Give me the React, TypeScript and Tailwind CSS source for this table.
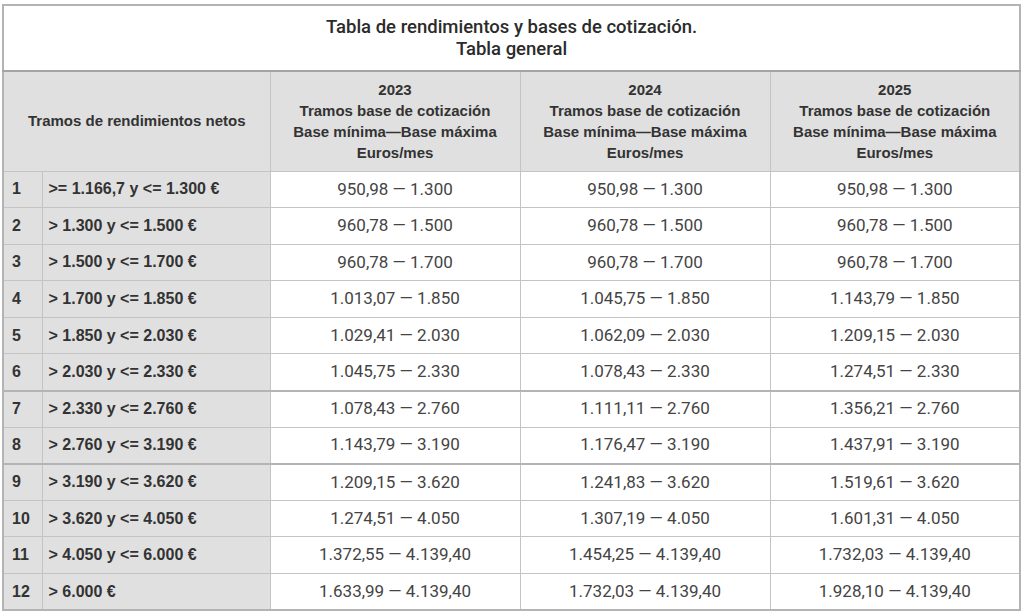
const rows: [string, string, string, string][] = [
  ['>= 1.166,7 y <= 1.300 €', '950,98 — 1.300', '950,98 — 1.300', '950,98 — 1.300'],
  ['> 1.300 y <= 1.500 €', '960,78 — 1.500', '960,78 — 1.500', '960,78 — 1.500'],
  ['> 1.500 y <= 1.700 €', '960,78 — 1.700', '960,78 — 1.700', '960,78 — 1.700'],
  ['> 1.700 y <= 1.850 €', '1.013,07 — 1.850', '1.045,75 — 1.850', '1.143,79 — 1.850'],
  ['> 1.850 y <= 2.030 €', '1.029,41 — 2.030', '1.062,09 — 2.030', '1.209,15 — 2.030'],
  ['> 2.030 y <= 2.330 €', '1.045,75 — 2.330', '1.078,43 — 2.330', '1.274,51 — 2.330'],
  ['> 2.330 y <= 2.760 €', '1.078,43 — 2.760', '1.111,11 — 2.760', '1.356,21 — 2.760'],
  ['> 2.760 y <= 3.190 €', '1.143,79 — 3.190', '1.176,47 — 3.190', '1.437,91 — 3.190'],
  ['> 3.190 y <= 3.620 €', '1.209,15 — 3.620', '1.241,83 — 3.620', '1.519,61 — 3.620'],
  ['> 3.620 y <= 4.050 €', '1.274,51 — 4.050', '1.307,19 — 4.050', '1.601,31 — 4.050'],
  ['> 4.050 y <= 6.000 €', '1.372,55 — 4.139,40', '1.454,25 — 4.139,40', '1.732,03 — 4.139,40'],
  ['> 6.000 €', '1.633,99 — 4.139,40', '1.732,03 — 4.139,40', '1.928,10 — 4.139,40'],
];

const years = ['2023', '2024', '2025'];

const groupStart = [6, 8];

export default function App() {
  return (
    <div className="min-h-screen bg-white pl-[2px] pt-[4px]">
      <table className="w-[1017px] table-fixed border-collapse border-2 border-[#b4b4b4] font-['Liberation_Sans',Arial,sans-serif]">
        <colgroup>
          <col className="w-[39px]" />
          <col className="w-[228px]" />
          <col className="w-[250px]" />
          <col className="w-[250px]" />
          <col className="w-[250px]" />
        </colgroup>
        <thead>
          <tr>
            <th
              colSpan={5}
              className="h-[66px] border-b-2 border-[#a4a4a4] bg-white text-center font-['Roboto',sans-serif] text-[18.5px] font-medium leading-[22px] text-[#2b2b2b]"
            >
              Tabla de rendimientos y bases de cotización.
              <br />
              Tabla general
            </th>
          </tr>
          <tr className="bg-[#e0e0e0]">
            <th
              colSpan={2}
              className="h-[100px] border border-[#c4c4c4] text-center text-[15px] font-bold text-[#333]"
            >
              Tramos de rendimientos netos
            </th>
            {years.map((y) => (
              <th
                key={y}
                className="border border-[#c4c4c4] text-center text-[15px] font-bold leading-[21px] text-[#333]"
              >
                {y}
                <br />
                Tramos base de cotización
                <br />
                Base mínima—Base máxima
                <br />
                Euros/mes
              </th>
            ))}
          </tr>
        </thead>
        <tbody>
          {rows.map((r, i) => {
            const thick = groupStart.includes(i);
            const rule = thick ? 'border-t-2 border-t-[#b4b4b4]' : '';
            return (
              <tr key={i} className="h-[36.6px]">
                <td className={`border border-[#c4c4c4] bg-[#e0e0e0] pl-[8px] text-[16px] font-bold text-[#333] ${rule}`}>
                  {i + 1}
                </td>
                <td className={`border border-[#c4c4c4] bg-[#e0e0e0] pl-[6px] text-[16px] font-bold text-[#333] ${rule}`}>
                  {r[0]}
                </td>
                {r.slice(1).map((v, j) => (
                  <td
                    key={j}
                    className={`border border-[#c4c4c4] bg-white text-center font-['Roboto',sans-serif] text-[17px] text-[#444] ${rule}`}
                  >
                    {v}
                  </td>
                ))}
              </tr>
            );
          })}
        </tbody>
      </table>
    </div>
  );
}
